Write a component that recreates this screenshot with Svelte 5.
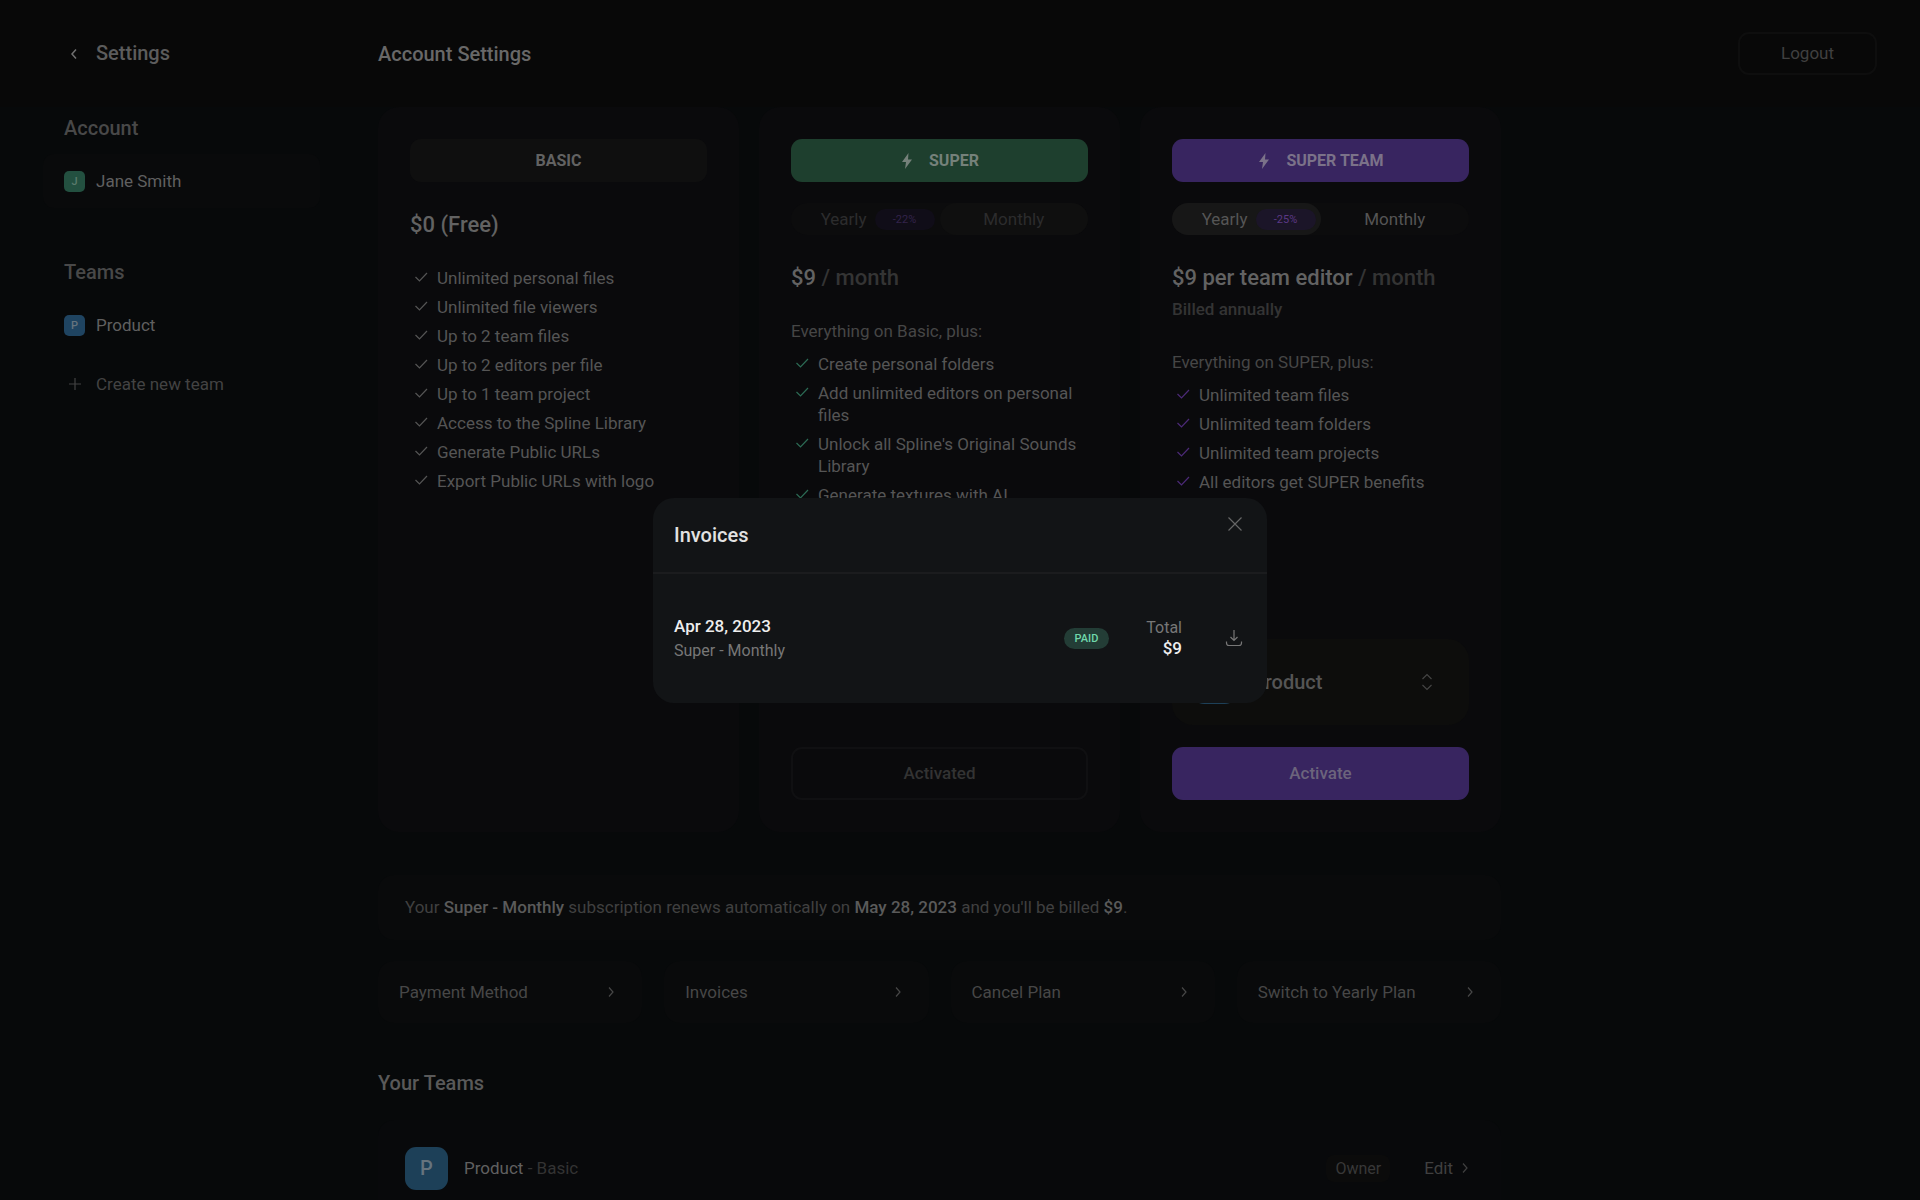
<script lang="ts">
	type Feature = string;

	const basicFeatures: Feature[] = [
		'Unlimited personal files',
		'Unlimited file viewers',
		'Up to 2 team files',
		'Up to 2 editors per file',
		'Up to 1 team project',
		'Access to the Spline Library',
		'Generate Public URLs',
		'Export Public URLs with logo'
	];

	const superFeatures: Feature[] = [
		'Create personal folders',
		'Add unlimited editors on personal files',
		"Unlock all Spline's Original Sounds Library",
		'Generate textures with AI'
	];

	const teamFeatures: Feature[] = [
		'Unlimited team files',
		'Unlimited team folders',
		'Unlimited team projects',
		'All editors get SUPER benefits'
	];

	const actions = ['Payment Method', 'Invoices', 'Cancel Plan', 'Switch to Yearly Plan'];

	let invoicesOpen = $state(true);
	let team = $state('Product');
	let teamBilling = $state('yearly');
</script>

{#snippet chevron()}
	<svg class="chevron" width="8" height="12" viewBox="0 0 8 12"><path d="M2 1.5 6 6l-4 4.5" /></svg>
{/snippet}

{#snippet bolt()}
	<svg class="bolt" width="14" height="16" viewBox="0 0 14 16"><path d="M8.5 0 2 9h4l-1 7 7-9.5H8z" /></svg>
{/snippet}

{#snippet features(items: Feature[])}
	<ul class="features">
		{#each items as item}
			<li>
				<svg width="14" height="20" viewBox="0 0 14 20"><path d="m1.5 10 4 4L13 6" /></svg>
				<span>{item}</span>
			</li>
		{/each}
	</ul>
{/snippet}

<div class="page">
	<header class="topbar">
		<a class="back" href="#files">
			<svg width="8" height="12" viewBox="0 0 8 12"><path d="M6 1.5 2 6l4 4.5" /></svg>
			<span>Settings</span>
		</a>
		<h1>Account Settings</h1>
		<button class="logout">Logout</button>
	</header>

	<div class="body">
		<nav class="sidebar">
			<section>
				<h2>Account</h2>
				<a class="navItem selected" href="#account">
					<span class="avatar green">J</span>
					<span>Jane Smith</span>
				</a>
			</section>
			<section>
				<h2>Teams</h2>
				<a class="navItem" href="#product">
					<span class="avatar">P</span>
					<span>Product</span>
				</a>
				<button class="navItem create">
					<svg width="21" height="14" viewBox="0 0 21 14"><path d="M11 1v12M5 7h12" /></svg>
					<span>Create new team</span>
				</button>
			</section>
		</nav>

		<main>
			<div class="plans">
				<article class="plan">
					<div class="planName">BASIC</div>
					<div class="price">$0 (Free)</div>
					{@render features(basicFeatures)}
				</article>

				<article class="plan super">
					<div class="planName">{@render bolt()}SUPER</div>
					<div class="toggle dimmed">
						<button class="yearly">Yearly <span class="discount">-22%</span></button>
						<button class="on">Monthly</button>
					</div>
					<div class="price">$9 <span>/ month</span></div>
					<p class="intro">Everything on Basic, plus:</p>
					{@render features(superFeatures)}
					<button class="activate" disabled>Activated</button>
				</article>

				<article class="plan superTeam">
					<div class="planName">{@render bolt()}SUPER TEAM</div>
					<div class="toggle">
						<button
							class="yearly"
							class:on={teamBilling === 'yearly'}
							onclick={() => (teamBilling = 'yearly')}
						>
							Yearly <span class="discount">-25%</span>
						</button>
						<button class:on={teamBilling === 'monthly'} onclick={() => (teamBilling = 'monthly')}>
							Monthly
						</button>
					</div>
					<div class="price">$9 per team editor <span>/ month</span></div>
					<p class="billed">Billed annually</p>
					<p class="intro">Everything on SUPER, plus:</p>
					{@render features(teamFeatures)}
					<label class="teamPicker">
						<span class="avatar large">P</span>
						<select bind:value={team} aria-label="Team">
							<option>Product</option>
						</select>
						<svg width="12" height="18" viewBox="0 0 12 18"><path d="M1.5 6 6 1.5 10.5 6M1.5 12 6 16.5l4.5-4.5" /></svg>
					</label>
					<button class="activate">Activate</button>
				</article>
			</div>

			<p class="renewal">
				Your <b>Super - Monthly</b> subscription renews automatically on <b>May 28, 2023</b> and you'll
				be billed <b>$9</b>.
			</p>

			<div class="actions">
				{#each actions as action}
					<button onclick={() => (invoicesOpen = action === 'Invoices')}>
						<span>{action}</span>
						{@render chevron()}
					</button>
				{/each}
			</div>

			<h2 class="teamsTitle">Your Teams</h2>
			<div class="teamRow">
				<span class="avatar large">P</span>
				<span class="teamName">Product <span>- Basic</span></span>
				<span class="role">Owner</span>
				<a href="#edit">Edit {@render chevron()}</a>
			</div>
		</main>
	</div>
</div>

{#if invoicesOpen}
	<div class="backdrop">
		<div class="modal" role="dialog" aria-modal="true" aria-labelledby="invoicesTitle">
			<div class="modalHeader">
				<h2 id="invoicesTitle">Invoices</h2>
				<button class="iconButton" aria-label="Close" onclick={() => (invoicesOpen = false)}>
					<svg width="16" height="16" viewBox="0 0 16 16"><path d="m1.5 1.5 13 13M14.5 1.5l-13 13" /></svg>
				</button>
			</div>
			<div class="invoice">
				<div class="invoiceInfo">
					<strong>Apr 28, 2023</strong>
					<span>Super - Monthly</span>
				</div>
				<span class="paid">PAID</span>
				<div class="total">
					<span>Total</span>
					<strong>$9</strong>
				</div>
				<button class="iconButton" aria-label="Download invoice">
					<svg width="18" height="18" viewBox="0 0 18 18">
						<path d="M9 1v10.5M5.5 8 9 11.5 12.5 8M1.5 12.5v1.5a2.5 2.5 0 0 0 2.5 2.5h10a2.5 2.5 0 0 0 2.5-2.5v-1.5" />
					</svg>
				</button>
			</div>
		</div>
	</div>
{/if}

<style>
	:global(body) {
		background: #07090a;
		color: #555;
		font-family: Roboto, 'Liberation Sans', sans-serif;
		font-size: 17px;
		line-height: 21px;
	}

	* {
		box-sizing: border-box;
	}

	h1,
	h2,
	p,
	ul {
		margin: 0;
		padding: 0;
	}

	h1,
	h2 {
		font-size: 20px;
		line-height: 24px;
		font-weight: 500;
	}

	a {
		color: inherit;
		text-decoration: none;
	}

	button,
	select {
		border: 0;
		padding: 0;
		background: none;
		color: inherit;
		font: inherit;
		cursor: pointer;
	}

	svg {
		flex: none;
		fill: none;
		stroke: currentColor;
		stroke-width: 1.2;
	}

	/* page */
	.page {
		height: 100vh;
		overflow: hidden;
	}

	.topbar {
		display: flex;
		align-items: center;
		height: 107px;
		padding: 0 43px 0 70px;
		background: #080808;
	}

	.back {
		display: flex;
		align-items: center;
		gap: 18px;
		width: 308px;
		color: #5c5c5c;
		font-size: 20px;
		font-weight: 500;
	}

	.back svg {
		color: #707070;
		stroke-width: 1.5;
	}

	h1 {
		flex: 1;
		color: #686868;
	}

	.logout {
		width: 139px;
		height: 43px;
		border: 2px solid #0e0e0e;
		border-radius: 11px;
		color: #404040;
	}

	.body {
		display: flex;
		gap: 58px;
		padding-left: 43px;
	}

	/* sidebar */
	.sidebar {
		display: flex;
		flex-direction: column;
		gap: 52px;
		width: 277px;
		padding-top: 9px;
	}

	.sidebar h2 {
		padding: 0 21px;
		margin-bottom: 14px;
		color: #484848;
	}

	.navItem {
		display: flex;
		align-items: center;
		gap: 11px;
		width: 100%;
		height: 54px;
		padding: 0 21px;
		border-radius: 11px;
		color: #606060;
	}

	.navItem.selected {
		background: #090a0b;
	}

	.navItem.create {
		margin-top: 5px;
		color: #434343;
	}

	.avatar {
		display: grid;
		flex: none;
		place-items: center;
		width: 21px;
		height: 21px;
		border-radius: 5px;
		background: #1f4461;
		color: #66747e;
		font-size: 11px;
		font-weight: 500;
	}

	.avatar.green {
		background: #235040;
		color: #5a7b6c;
	}

	.avatar.large {
		width: 43px;
		height: 43px;
		border-radius: 11px;
		font-size: 20px;
		background: #1d4058;
	}

	/* plans */
	main {
		flex: 1;
		max-width: 1123px;
	}

	.plans {
		display: grid;
		grid-template-columns: repeat(3, 1fr);
		gap: 20px;
	}

	.plan {
		display: flex;
		flex-direction: column;
		min-height: 725px;
		padding: 32px;
		border-radius: 21px;
		background: #0a0a0c;
	}

	.planName {
		display: flex;
		align-items: center;
		justify-content: center;
		gap: 15px;
		height: 43px;
		border-radius: 11px;
		background: #0f0f0f;
		color: #626262;
		font-size: 16px;
		font-weight: 700;
	}

	.super .planName {
		background: #1e3f2e;
		color: #75817a;
	}

	.superTeam .planName {
		background: #382560;
		color: #7b7289;
	}

	.bolt {
		fill: currentColor;
		stroke: none;
	}

	.price {
		margin-top: 29px;
		color: #626262;
		font-size: 22px;
		line-height: 28px;
		font-weight: 500;
	}

	.price span {
		color: #343434;
	}

	.toggle {
		display: grid;
		grid-template-columns: 1fr 1fr;
		margin-top: 21px;
		border-radius: 16px;
		background: #0c0c0d;
		color: #555;
	}

	.toggle button {
		display: flex;
		align-items: center;
		justify-content: center;
		gap: 8px;
		height: 32px;
		border-radius: 16px;
	}

	.toggle .yearly {
		justify-content: flex-end;
		padding-right: 5px;
	}

	.toggle .on {
		background: #171717;
	}

	.toggle.dimmed {
		color: #2c2c2d;
	}

	.toggle.dimmed .on {
		background: #0f0f0f;
	}

	.discount {
		width: 60px;
		border-radius: 11px;
		background: #1b1528;
		color: #5b3885;
		font-size: 11px;
		line-height: 21px;
	}

	.dimmed .discount {
		background: #100d18;
		color: #33234b;
	}

	.billed {
		margin-top: 7px;
		color: #343434;
		font-weight: 500;
	}

	.intro {
		margin-top: 29px;
		color: #464646;
	}

	.billed + .intro {
		margin-top: 32px;
	}

	.features {
		display: flex;
		flex-direction: column;
		gap: 7px;
		margin-top: 11px;
		list-style: none;
		line-height: 22px;
	}

	.price + .features {
		margin-top: 28px;
	}

	.features li {
		display: flex;
		gap: 9px;
		padding-left: 4px;
		color: #555;
	}

	.super .features svg {
		color: #2c6b55;
	}

	.superTeam .features svg {
		color: #4c2a78;
	}

	.teamPicker {
		display: flex;
		align-items: center;
		gap: 16px;
		height: 86px;
		margin-top: auto;
		padding: 0 36px 0 21px;
		border-radius: 21px;
		background: #0d0d0c;
	}

	.teamPicker select {
		flex: 1;
		appearance: none;
		font-size: 20px;
		font-weight: 500;
	}

	.teamPicker svg {
		color: #444;
	}

	.activate {
		height: 53px;
		margin-top: auto;
		border-radius: 11px;
		font-weight: 500;
	}

	.super .activate {
		border: 2px solid #101012;
		color: #333;
	}

	.superTeam .activate {
		margin-top: 22px;
		background: #382560;
		color: #6c647c;
	}

	/* subscription */
	.renewal {
		margin-top: 43px;
		padding: 22px 27px;
		border-radius: 16px;
		background: #090a0b;
		color: #404040;
	}

	.renewal b {
		color: #5a5a5a;
		font-weight: 500;
	}

	.actions {
		display: grid;
		grid-template-columns: repeat(4, 1fr);
		gap: 22px;
		margin-top: 21px;
	}

	.actions button {
		display: flex;
		align-items: center;
		justify-content: space-between;
		height: 62px;
		padding: 0 27px 0 21px;
		border-radius: 16px;
		background: #090a0b;
		color: #474747;
	}

	.teamsTitle {
		margin-top: 48px;
		color: #595959;
	}

	.teamRow {
		display: flex;
		align-items: center;
		height: 96px;
		margin-top: 25px;
		padding: 0 32px 0 27px;
		border-radius: 16px;
		background: #08090b;
	}

	.teamName {
		flex: 1;
		margin-left: 16px;
		color: #606060;
	}

	.teamName span {
		color: #333;
	}

	.role {
		margin-right: 34px;
		padding: 3px 9px;
		border-radius: 8px;
		background: #0b0b0b;
		color: #383838;
		font-size: 16px;
	}

	.teamRow a {
		display: flex;
		align-items: center;
		gap: 8px;
		color: #404040;
	}

	/* invoices */
	.backdrop {
		position: fixed;
		inset: 0;
		display: grid;
		place-items: center;
	}

	.modal {
		width: 614px;
		border-radius: 21px;
		background: #121416;
		color: #eee;
	}

	.modalHeader {
		display: flex;
		align-items: flex-start;
		justify-content: space-between;
		height: 76px;
		padding: 18px 24px 0 21px;
		border-bottom: 2px solid #1b1c1e;
	}

	.modalHeader h2 {
		margin-top: 7px;
		color: #e2e2e2;
	}

	.iconButton {
		display: flex;
		color: #777;
	}

	.modalHeader .iconButton {
		color: #666;
	}

	.invoice {
		display: flex;
		align-items: center;
		padding: 42px 24px 42px 21px;
	}

	.invoiceInfo {
		display: flex;
		flex: 1;
		flex-direction: column;
		gap: 3px;
	}

	.invoiceInfo span,
	.total span {
		color: #777;
		font-size: 16px;
	}

	strong {
		font-weight: 500;
	}

	.paid {
		width: 45px;
		border-radius: 11px;
		background: #233d36;
		color: #70d8ab;
		font-size: 11px;
		font-weight: 500;
		text-align: center;
	}

	.total {
		display: flex;
		flex-direction: column;
		width: 73px;
		margin-right: 43px;
		text-align: right;
	}
</style>
